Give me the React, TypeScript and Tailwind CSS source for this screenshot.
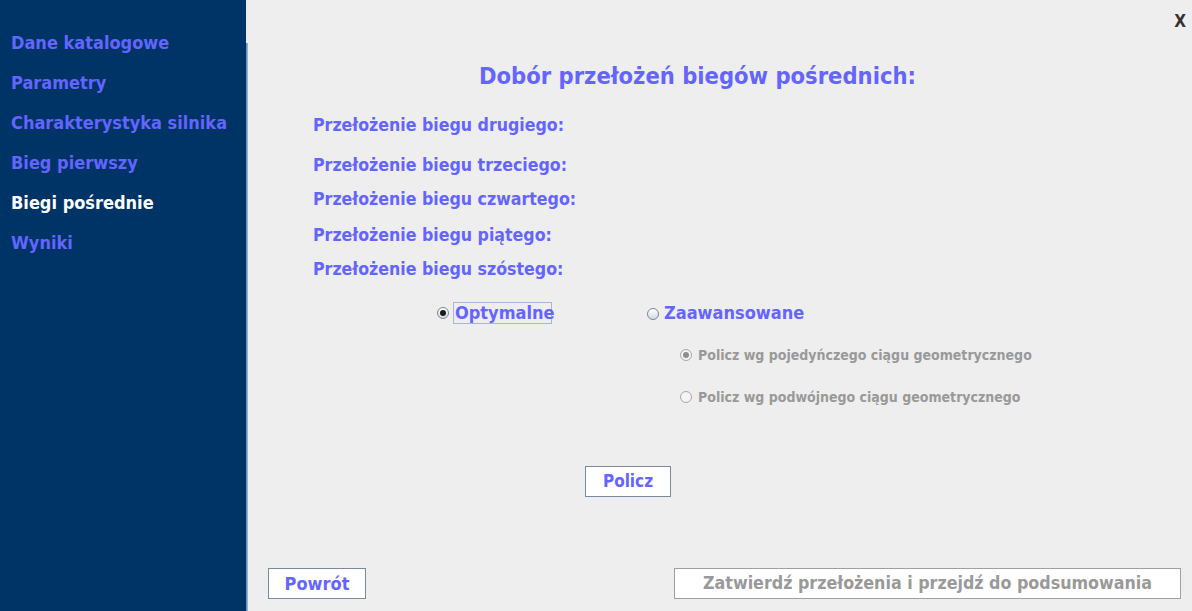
import React from "react";

const FONT = "font-['DejaVu_Sans_Condensed','DejaVu_Sans',sans-serif]";

const menu = [
  { label: "Dane katalogowe", active: false },
  { label: "Parametry", active: false },
  { label: "Charakterystyka silnika", active: false },
  { label: "Bieg pierwszy", active: false },
  { label: "Biegi pośrednie", active: true },
  { label: "Wyniki", active: false },
];

function Radio({ checked, disabled }: { checked?: boolean; disabled?: boolean }) {
  return (
    <span
      className={`inline-flex h-[12px] w-[12px] shrink-0 items-center justify-center rounded-full border ${
        disabled ? "border-[#a8a8a8] bg-[#f4f4f4]" : "border-[#7a8594] bg-gradient-to-b from-white to-[#d3dbe6]"
      }`}
    >
      {checked && (
        <span className={`h-[6px] w-[6px] rounded-full ${disabled ? "bg-[#8d8d8d]" : "bg-[#1a1a1a]"}`} />
      )}
    </span>
  );
}

export default function App() {
  return (
    <div className={`flex h-[611px] w-[1192px] overflow-hidden bg-[#eeeeee] ${FONT} font-bold`}>
      {/* sidebar */}
      <div className="flex w-[246px] shrink-0 flex-col bg-[#003366] pl-[11px] pt-[22px]">
        {menu.map((m) => (
          <div
            key={m.label}
            className={`flex h-[40px] items-center text-[18px] ${m.active ? "text-white" : "text-[#6464ff]"}`}
          >
            {m.label}
          </div>
        ))}
      </div>
      <div className="flex w-[2px] shrink-0 flex-col">
        <div className="h-[43px]" />
        <div className="flex-1 bg-gradient-to-r from-[#5a7fb6] to-[#aac0dc]" />
      </div>

      {/* main */}
      <div className="flex flex-1 flex-col">
        <div className="flex h-[20px] mt-[11px] justify-end pr-[6px] text-[17px] leading-[20px] text-[#333333]">
          X
        </div>

        <div className="ml-[231px] mt-[31px] h-[28px] text-[23.5px] leading-[28px] text-[#6464ff]">
          Dobór przełożeń biegów pośrednich:
        </div>

        <div className="ml-[65px] flex flex-col text-[17.6px] leading-[20px] text-[#6464ff]">
          <div className="mt-[25px] h-[20px]">Przełożenie biegu drugiego:</div>
          <div className="mt-[20px] h-[20px]">Przełożenie biegu trzeciego:</div>
          <div className="mt-[14px] h-[20px]">Przełożenie biegu czwartego:</div>
          <div className="mt-[16px] h-[20px]">Przełożenie biegu piątego:</div>
          <div className="mt-[14px] h-[20px]">Przełożenie biegu szóstego:</div>
        </div>

        <div className="ml-[189px] mt-[23px] flex h-[22px] items-center text-[18px] text-[#6464ff]">
          <Radio checked />
          <span className="ml-[4px] flex h-[22px] w-[99px] items-center border border-[#a3b8d6] pl-[1px] leading-[20px]">
            Optymalne
          </span>
          <span className="ml-[95px]">
            <Radio />
          </span>
          <span className="ml-[5px] leading-[20px]">Zaawansowane</span>
        </div>

        <div className="ml-[432px] flex flex-col text-[14px] leading-[20px] text-[#999999]">
          <div className="mt-[21px] flex h-[20px] items-center gap-[6px]">
            <Radio checked disabled />
            <span>Policz wg pojedyńczego ciągu geometrycznego</span>
          </div>
          <div className="mt-[22px] flex h-[20px] items-center gap-[6px]">
            <Radio disabled />
            <span>Policz wg podwójnego ciągu geometrycznego</span>
          </div>
        </div>

        <div className="ml-[337px] mt-[59px]">
          <button className="flex h-[31px] w-[86px] items-center justify-center border border-[#7a8a9c] bg-white text-[17px] text-[#6464ff]">
            Policz
          </button>
        </div>

        <div className="mt-[71px] flex items-center justify-between pl-[20px] pr-[11px]">
          <button className="flex h-[31px] w-[98px] items-center justify-center border border-[#7a8a9c] bg-white text-[18px] text-[#6464ff]">
            Powrót
          </button>
          <button className="flex h-[31px] w-[507px] items-center justify-center border border-[#a0a0a0] bg-white text-[17.7px] text-[#999999]">
            Zatwierdź przełożenia i przejdź do podsumowania
          </button>
        </div>
      </div>
    </div>
  );
}
